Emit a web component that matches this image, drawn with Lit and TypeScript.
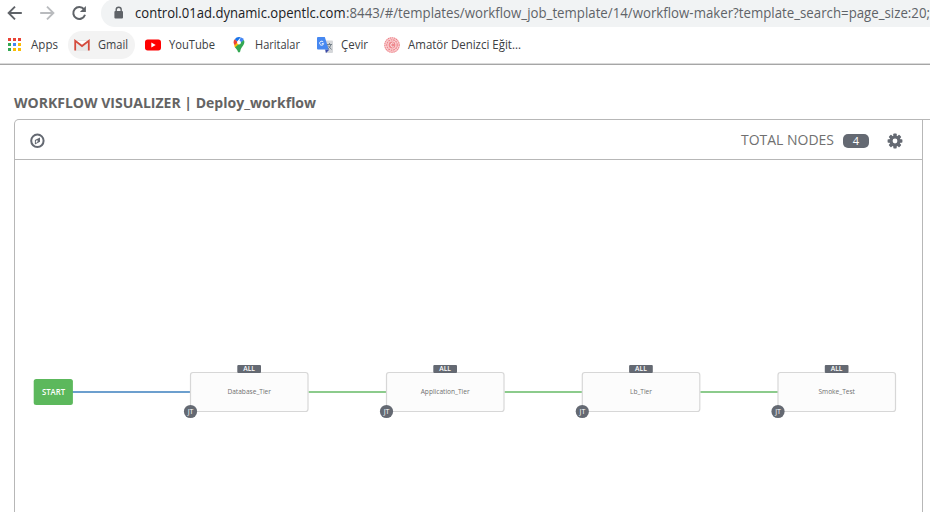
import { LitElement, html, svg, css } from "lit";
import { customElement } from "lit/decorators.js";

interface FlowNode {
  name: string;
  x: number;
  labelWidth: number;
}

const nodes: FlowNode[] = [
  { name: "Database_Tier", x: 190.5, labelWidth: 43.5 },
  { name: "Application_Tier", x: 386.5, labelWidth: 49 },
  { name: "Lb_Tier", x: 582.3, labelWidth: 22 },
  { name: "Smoke_Test", x: 778, labelWidth: 36.5 },
];

/* One line of text set to a fixed measure. */
const label = (text: string, width: number, cls = "") => html`
  <svg class="label ${cls}" width=${width} height="20">
    <text x="0" y="15" textLength=${width} lengthAdjust="spacingAndGlyphs">${text}</text>
  </svg>`;

@customElement("browser-bar")
export class BrowserBar extends LitElement {
  static styles = css`
    :host { display: block; height: 65px; box-sizing: border-box; overflow: hidden; background: #fff;
      border-bottom: 1px solid #a6a6a6; box-shadow: inset 0 -1px #dadada; }
    svg { display: block; flex: none; overflow: visible; }
    .nav { display: flex; height: 27px; align-items: center; }
    .arrows { display: flex; width: 101px; }
    .address { flex: 1; display: flex; align-items: center; height: 28px; margin-top: -1px;
      padding-left: 12px; background: #f1f3f4; border-radius: 14px 0 0 14px; }
    .address .label { margin-top: -1px; }
    .lock { margin-right: 10px; }
    .label { font: 14px "Open Sans", "Noto Sans", sans-serif; fill: #5f6368; }
    .host { fill: #202124; }
    .marks { display: flex; align-items: center; height: 28px; margin-top: 4px; }
    .mark { display: flex; align-items: center; height: 28px; gap: 8px; }
    .mark .label { font-size: 12px; fill: #3c4043; margin-top: -2px; }
    .apps { padding-left: 7px; width: 61px; }
    .gmail { box-sizing: border-box; width: 67px; padding-left: 6px; border-radius: 14px; background: #f3f3f3; }
    .tube { margin-left: 10px; }
    .maps { margin-left: 16px; }
    .translate { margin-left: 17px; }
    .sailor { margin-left: 16px; }
  `;

  private arrows() {
    return html`<svg class="arrows" width="101" height="27" fill="none" stroke-width="1.9">
      <path d="M21.8 13H9M15 6.6L8.6 13l6.4 6.4" stroke="#5f6368" />
      <path d="M40.2 13H53M47 6.6L53.4 13 47 19.4" stroke="#b9bbbe" />
      <path d="M84 9.2A6 6 0 1 0 85 14.8" stroke="#5f6368" stroke-width="2" />
      <path d="M85.9 6v6h-6z" fill="#5f6368" />
    </svg>`;
  }

  private appsIcon() {
    const colors = ["#ea4335", "#ea4335", "#ea4335", "#34a853", "#4285f4", "#fbbc05", "#34a853", "#fbbc05", "#fbbc05"];
    return html`<svg width="16" height="16">
      ${colors.map((c, i) => svg`<rect x=${1 + (i % 3) * 5} y=${1 + Math.floor(i / 3) * 5} width="3" height="3" fill=${c} />`)}
    </svg>`;
  }

  render() {
    return html`
      <div class="nav">
        ${this.arrows()}
        <div class="address">
          <svg class="lock" width="12" height="14">
            <rect x="1.4" y="5" width="8.6" height="7.5" rx="1" fill="#5f6368" />
            <path d="M3.2 6V3.7a2.5 2.5 0 0 1 5 0V6" fill="none" stroke="#5f6368" stroke-width="1.4" />
          </svg>
          ${label("control.01ad.dynamic.opentlc.com", 210.5, "host")}
          ${label(":8443/#/templates/workflow_job_template/14/workflow-maker?template_search=page_size:20;", 584)}
        </div>
      </div>
      <div class="marks">
        <div class="mark apps">${this.appsIcon()}${label("Apps", 27)}</div>
        <div class="mark gmail">
          <svg width="16" height="16">
            <path d="M1 3h14v11H1z" fill="#e8e8e8" />
            <path d="M3 4l5 4 5-4z" fill="#fff" />
            <path d="M1.2 13.5V3.8L8 9l6.8-5.2v9.7" fill="none" stroke="#d54b3d" stroke-width="1.8" />
          </svg>
          ${label("Gmail", 30)}
        </div>
        <div class="mark tube">
          <svg width="16" height="16">
            <rect y="2.5" width="16" height="11" rx="2.7" fill="#f00" />
            <path d="M6.3 5.5v5l4.4-2.5z" fill="#fff" />
          </svg>
          ${label("YouTube", 46)}
        </div>
        <div class="mark maps">
          <svg width="16" height="16">
            <path d="M3.7 2.3L8 6 4.3 9.3C2.2 6.7 2 4.2 3.7 2.3z" fill="#ea4335" />
            <path d="M3.7 2.3A5.5 5.5 0 0 1 9.7.3L6.2 4.5z" fill="#1a73e8" />
            <path d="M9.7.3a5.5 5.5 0 0 1 3.2 2.8L9.7 7 8 5z" fill="#4285f4" />
            <path d="M9.7 7L4.3 11.3 3.2 8.8 7 4.8z" fill="#fbbc04" />
            <path d="M12.9 3.1c2 4.4-2.8 6.4-3.7 11.3q-1.2 2.3-2.4 0c-.5-1.7-1.4-2.4-2.7-4.2z" fill="#34a853" />
            <circle cx="8" cy="5.5" r="1.9" fill="#fff" />
          </svg>
          ${label("Haritalar", 45)}
        </div>
        <div class="mark translate">
          <svg width="16" height="16">
            <path d="M6 3.5h9q1 0 1 1V15q0 1-1 1H8.5z" fill="#d5d7da" />
            <path d="M8.2 12.5h4.3L9 16z" fill="#3949ab" />
            <path d="M1 0h6.8l4 12.5H1q-1 0-1-1V1q0-1 1-1z" fill="#4688f1" />
            <path d="M6.4 5.2A2 2 0 1 0 6.6 6.7H4.8" fill="none" stroke="#fff" stroke-width="1" />
            <path d="M10 7.5h5M12.5 6v1.5M14 7.5q-.8 3-3.2 4.5M11 8.5l3.5 4" fill="none" stroke="#6b7780" stroke-width=".9" />
          </svg>
          ${label("Çevir", 27)}
        </div>
        <div class="mark sailor">
          <svg width="16" height="16" fill="none" stroke="#ed858b">
            <circle cx="8" cy="8" r="7.8" fill="#fbd3d5" stroke="none" />
            <circle cx="8" cy="8" r="7.2" stroke-width="1.1" stroke-dasharray="1.5 .6" />
            <circle cx="8" cy="8" r="5.2" stroke-width="1.2" stroke-dasharray="1.8 .7" />
            <circle cx="8" cy="8" r="3.4" fill="#ee8a8f" stroke="none" />
            <path d="M9.8 6.3a2 2 0 1 0 0 3.4" stroke="#fff" stroke-width=".8" />
          </svg>
          ${label("Amatör Denizci Eğit...", 113)}
        </div>
      </div>`;
  }
}

@customElement("workflow-graph")
export class WorkflowGraph extends LitElement {
  static styles = css`
    :host { display: block; flex: 1; overflow: hidden; }
    svg { display: block; font-family: "Open Sans", "Noto Sans", sans-serif; }
    .start { font-size: 8px; fill: #fff; font-weight: 600; }
    .name { font-size: 7px; fill: #707070; }
    .all { font-size: 6.5px; fill: #fff; font-weight: 600; }
    .type { font-size: 7px; fill: #fff; }
  `;

  render() {
    return html`<svg width="907" height="352" viewBox="15 160 907 352">
      <path d="M72 392H190" stroke="#6c9fce" stroke-width="2" />
      ${nodes.slice(0, -1).map((n, i) => svg`
        <path d="M${n.x + 118} 392H${nodes[i + 1].x}" stroke="#8ccb8c" stroke-width="2" />`)}
      <rect x="33.7" y="379" width="39.2" height="26" rx="2.5" fill="#5cb85c" />
      <text class="start" x="42" y="395" textLength="23" lengthAdjust="spacingAndGlyphs">START</text>
      ${nodes.map((n) => svg`
        <rect x=${n.x} y="372.5" width="117.5" height="39" rx="2.5" fill="#fcfcfc" stroke="#d7d7d7" stroke-width="1.2" />
        <rect x=${n.x + 46.8} y="365" width="23.7" height="8" rx="1" fill="#646972" />
        <text class="all" x=${n.x + 52.8} y="371" textLength="11.7" lengthAdjust="spacingAndGlyphs">ALL</text>
        <text class="name" x=${n.x + 58.7 - n.labelWidth / 2} y="394" textLength=${n.labelWidth} lengthAdjust="spacingAndGlyphs">${n.name}</text>
        <circle cx=${n.x} cy="411.5" r="6.6" fill="#646972" />
        <text class="type" x=${n.x - 2.8} y="414" textLength="5.8" lengthAdjust="spacingAndGlyphs">JT</text>`)}
    </svg>`;
  }
}

@customElement("app-root")
export class AppRoot extends LitElement {
  static styles = css`
    :host { display: block; width: 930px; height: 512px; overflow: hidden; background: #fff;
      font-family: "Open Sans", "Noto Sans", sans-serif; }
    svg { display: block; flex: none; overflow: visible; }
    .title { height: 54px; box-sizing: border-box; padding: 28px 0 0 14px; }
    .title .label { font: 700 14px "Open Sans", sans-serif; fill: #646464; }
    .columns { display: flex; height: 393px; padding-left: 14px; }
    .panel { box-sizing: border-box; width: 909px; flex: none; display: flex; flex-direction: column;
      border: 1px solid #b7b7b7; border-bottom: 0; border-top-left-radius: 5px; }
    .side { flex: 1; border-top: 1px solid #b7b7b7; }
    .head { display: flex; align-items: center; box-sizing: border-box; height: 40px; flex: none;
      padding: 0 19px 0 15px; border-bottom: 1px solid #b7b7b7; }
    .total { margin-left: auto; }
    .total .label { font: 14px "Open Sans", sans-serif; fill: #707070; }
    .count { width: 26px; height: 14px; margin: 3px 18px 0 9px; border-radius: 5px; background: #646972;
      color: #fff; font-size: 11px; line-height: 14px; text-align: center; }
    .gear { margin-top: 2px; }
    .compass { margin-top: 2px; }
  `;

  private gear() {
    return html`<svg class="gear" width="16" height="16">
      ${[0, 45, 90, 135].map((a) => svg`<rect x="6.3" y="0.6" width="3.4" height="14.8" rx=".7" fill="#646972" transform="rotate(${a} 8 8)" />`)}
      <circle cx="8" cy="8" r="5.6" fill="#646972" />
      <circle cx="8" cy="8" r="2.4" fill="#fff" />
    </svg>`;
  }

  render() {
    return html`
      <browser-bar></browser-bar>
      <div class="title">${label("WORKFLOW VISUALIZER | Deploy_workflow", 302)}</div>
      <div class="columns">
        <div class="panel">
          <div class="head">
            <svg class="compass" width="15" height="15">
              <circle cx="7.4" cy="7.8" r="6.2" fill="none" stroke="#646972" stroke-width="2" />
              <path d="M10 4.4v4.4l-5.1 2.7V7.1z" fill="#646972" />
              <path d="M7.5 7v2.1L5.9 10V7.8z" fill="#fff" />
            </svg>
            <div class="total">${label("TOTAL NODES", 93)}</div>
            <div class="count">4</div>
            ${this.gear()}
          </div>
          <workflow-graph></workflow-graph>
        </div>
        <div class="side"></div>
      </div>`;
  }
}
